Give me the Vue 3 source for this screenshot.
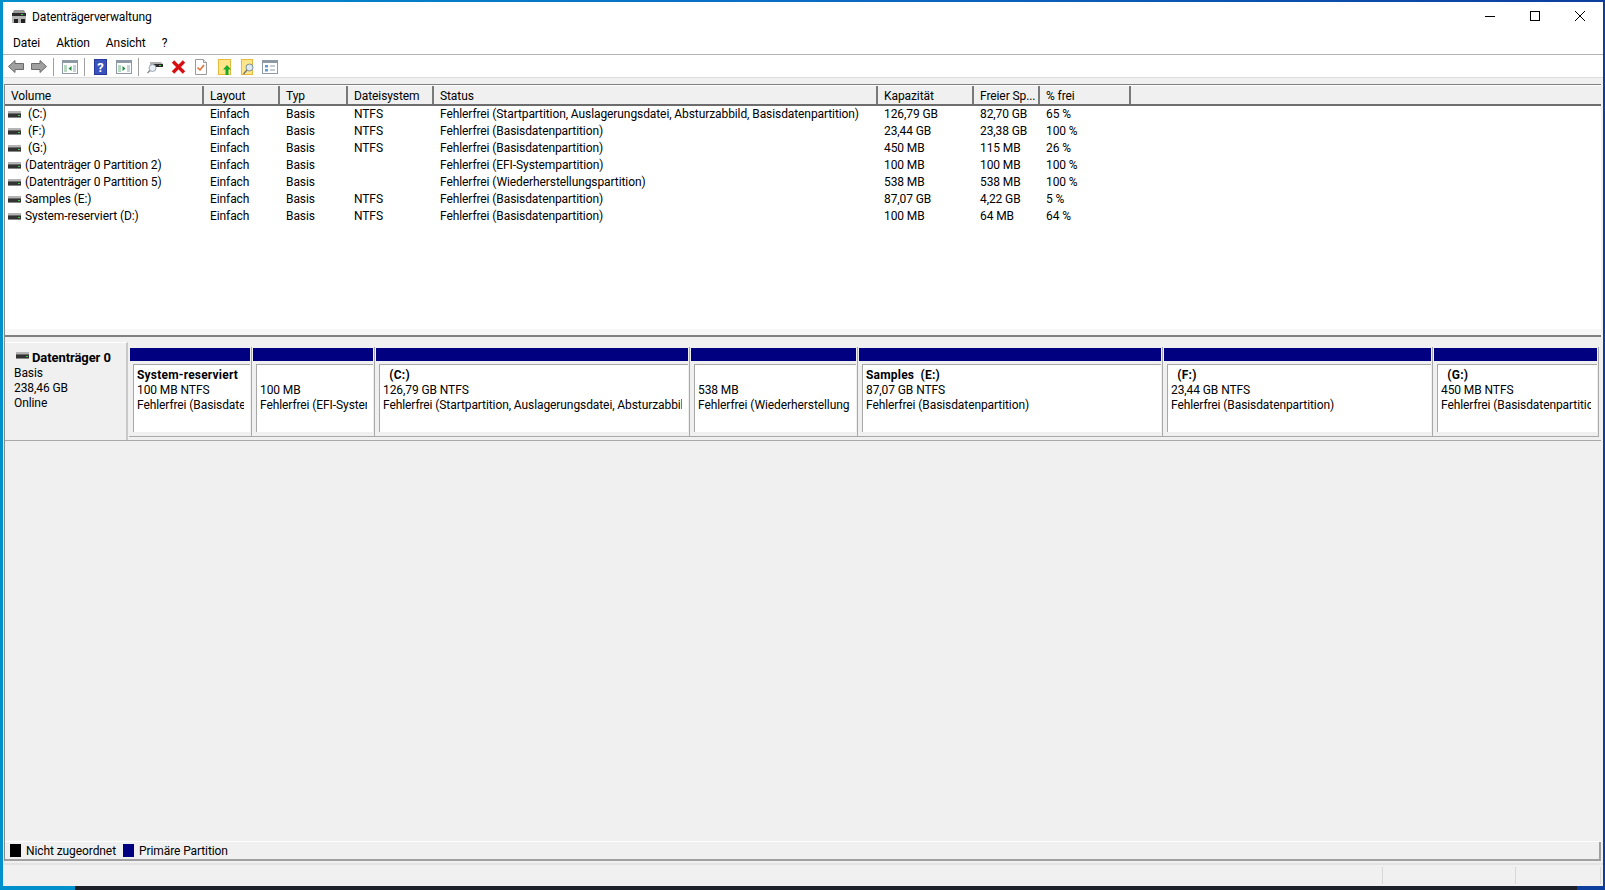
<template>
  <div class="desktop">
    <div class="window">
      <div class="titlebar">
        <svg class="app-icon" width="16" height="15" viewBox="0 0 16 15">
          <path d="M3 1h10l2 4H1z" fill="#9a9a9a" />
          <rect x="1" y="4" width="14" height="3" fill="#2b2b2b" />
          <rect x="10" y="5" width="2" height="1" fill="#3fd04a" />
          <rect x="1" y="7" width="14" height="7" fill="#b4b4b4" />
          <rect x="3" y="10" width="4" height="4" fill="#222" />
          <rect x="10" y="10" width="4" height="4" fill="#222" />
        </svg>
        <span class="title">Datenträgerverwaltung</span>
        <div class="win-buttons">
          <button class="win-btn">
            <svg width="10" height="10" viewBox="0 0 10 10"><path d="M0 5.500h10" stroke="#000" fill="none" /></svg>
          </button>
          <button class="win-btn">
            <svg width="10" height="10" viewBox="0 0 10 10"><rect x="0.5" y="0.5" width="9" height="9" stroke="#000" fill="none" /></svg>
          </button>
          <button class="win-btn">
            <svg width="10" height="10" viewBox="0 0 10 10"><path d="M0 0l10 10M10 0L0 10" stroke="#000" fill="none" stroke-width="1" /></svg>
          </button>
        </div>
      </div>

      <nav class="menubar">
        <span v-for="item in menu" :key="item">{{ item }}</span>
      </nav>

      <div class="toolbar">
        <svg class="tool back" width="16" height="13" viewBox="0 0 16 13"><path d="M0.5 6.500L7 .5v3h8.500v6H7v3z" fill="#a0a0a0" stroke="#6a6a6a" /></svg>
        <svg class="tool fwd" width="16" height="13" viewBox="0 0 16 13"><path d="M15.500 6.500L9 .5v3H.5v6H9v3z" fill="#a0a0a0" stroke="#6a6a6a" /></svg>
        <i class="sep sep-a"></i>
        <svg class="tool tree" width="16" height="14" viewBox="0 0 16 14">
          <rect x=".5" y=".5" width="15" height="13" fill="#fff" stroke="#8d9aa6" />
          <rect x="1" y="1" width="14" height="2" fill="#8d9aa6" />
          <rect x="2" y="5" width="3" height="7" fill="#b9d8c0" />
          <rect x="11" y="5" width="3" height="7" fill="#c9d2da" />
          <path d="M9.500 6v5L6.500 8.500z" fill="#1e8a3c" />
        </svg>
        <i class="sep sep-b"></i>
        <svg class="tool help" width="13" height="16" viewBox="0 0 13 16">
          <rect width="13" height="16" fill="#26389c" />
          <rect x="1" y="1" width="11" height="14" fill="#3a52bc" />
          <text x="6.500" y="13" text-anchor="middle" class="help-mark">?</text>
        </svg>
        <svg class="tool tree2" width="16" height="14" viewBox="0 0 16 14">
          <rect x=".5" y=".5" width="15" height="13" fill="#fff" stroke="#8d9aa6" />
          <rect x="1" y="1" width="14" height="2" fill="#8d9aa6" />
          <rect x="2" y="5" width="3" height="7" fill="#b9d8c0" />
          <rect x="11" y="5" width="3" height="7" fill="#c9d2da" />
          <path d="M6.500 6v5l3-2.500z" fill="#1e8a3c" />
        </svg>
        <i class="sep sep-c"></i>
        <svg class="tool scan" width="16" height="14" viewBox="0 0 16 14">
          <path d="M3 2h11l2 2v3H3z" fill="#b0b0b0" />
          <rect x="6" y="4" width="10" height="3" fill="#2b2b2b" />
          <rect x="12" y="5" width="2" height="1" fill="#3fd04a" />
          <circle cx="5.500" cy="8" r="3.500" fill="#e6eff5" stroke="#9aa8b2" />
          <path d="M3 10.500L0.500 13" stroke="#8a8a8a" stroke-width="1.500" />
        </svg>
        <svg class="tool remove" width="15" height="14" viewBox="0 0 15 14">
          <path d="M2 1.500l11 11M13 1.500l-11 11" stroke="#d80f12" stroke-width="3.400" fill="none" />
        </svg>
        <svg class="tool check" width="12" height="16" viewBox="0 0 12 16">
          <path d="M.5.5h8l3 3v12H.5z" fill="#fff" stroke="#9a9a9a" />
          <path d="M8.500.5v3h3" fill="#eee" stroke="#9a9a9a" />
          <path d="M2.500 8.500l2.500 2.500 4-5" stroke="#e8682a" stroke-width="1.500" fill="none" />
        </svg>
        <svg class="tool up" width="13" height="16" viewBox="0 0 13 16">
          <rect x=".5" y=".5" width="12" height="15" fill="#fde68a" stroke="#e8b93b" />
          <path d="M9 6l4 4.500h-2.500V16h-3v-5.500H5z" fill="#18a92a" />
        </svg>
        <svg class="tool find" width="13" height="16" viewBox="0 0 13 16">
          <rect x=".5" y=".5" width="11" height="15" fill="#fde68a" stroke="#e8b93b" />
          <circle cx="8.500" cy="8.500" r="3.500" fill="#dfeaf2" stroke="#7c8c98" />
          <path d="M6 11l-3.500 4" stroke="#7a7a7a" stroke-width="1.500" />
        </svg>
        <svg class="tool list" width="16" height="14" viewBox="0 0 16 14">
          <rect x=".5" y=".5" width="15" height="13" fill="#fff" stroke="#8d9aa6" />
          <rect x="1" y="1" width="14" height="2" fill="#8d9aa6" />
          <rect x="3" y="5" width="3" height="2.500" fill="#5f9bd6" />
          <rect x="3" y="9" width="3" height="2.500" fill="#5f9bd6" />
          <path d="M8 6h5M8 10h5" stroke="#8d9aa6" />
        </svg>
      </div>

      <div class="main">
        <section class="volumes">
          <div class="list-head vol-grid">
            <div v-for="h in headers" :key="h" class="head-cell">{{ h }}</div>
          </div>
          <div v-for="v in volumes" :key="v.name" class="vol-row vol-grid">
            <div class="cell name-cell">
              <svg class="drive" width="13" height="7" viewBox="0 0 13 7">
                <rect y="0" width="13" height="2" fill="#b4b4b4" />
                <rect y="2" width="13" height="1" fill="#6a6a6a" />
                <rect y="3" width="13" height="3" fill="#333" />
                <rect y="6" width="13" height="1" fill="#888" />
                <rect x="10" y="4" width="2" height="1" fill="#3fd04a" />
              </svg>
              <span>{{ v.name }}</span>
            </div>
            <div class="cell">Einfach</div>
            <div class="cell">Basis</div>
            <div class="cell">{{ v.fs }}</div>
            <div class="cell">{{ v.status }}</div>
            <div class="cell">{{ v.size }}</div>
            <div class="cell">{{ v.free }}</div>
            <div class="cell">{{ v.pct }}</div>
          </div>
          <div class="list-foot"></div>
        </section>

        <section class="graph">
          <div class="disk-row">
            <div class="disk-label">
              <div class="disk-name">
                <svg width="13" height="7" viewBox="0 0 13 7">
                  <rect y="0" width="13" height="2" fill="#b4b4b4" />
                  <rect y="2" width="13" height="1" fill="#6a6a6a" />
                  <rect y="3" width="13" height="3" fill="#333" />
                  <rect y="6" width="13" height="1" fill="#888" />
                  <rect x="10" y="4" width="2" height="1" fill="#3fd04a" />
                </svg>
                <b>Datenträger 0</b>
              </div>
              <div>Basis</div>
              <div>238,46 GB</div>
              <div>Online</div>
            </div>
            <div class="partitions">
              <div v-for="p in partitions" :key="p.line2 + p.w" class="partition" :style="{ width: p.w + 'px' }">
                <div class="bar"></div>
                <div class="part-box">
                  <div class="part-title">{{ p.title }}</div>
                  <div>{{ p.line2 }}</div>
                  <div>{{ p.line3 }}</div>
                </div>
              </div>
            </div>
          </div>
        </section>

        <div class="legend">
          <i class="swatch black"></i><span>Nicht zugeordnet</span>
          <i class="swatch navy"></i><span>Primäre Partition</span>
        </div>
      </div>

      <footer class="statusbar">
        <div class="st-main"></div>
        <div class="st-a"></div>
        <div class="st-b"></div>
      </footer>
    </div>
    <div class="taskbar">
      <i class="task-start"></i>
      <i class="task-end"></i>
    </div>
  </div>
</template>

<script setup>
const menu = ['Datei', 'Aktion', 'Ansicht', '?']

const headers = ['Volume', 'Layout', 'Typ', 'Dateisystem', 'Status', 'Kapazität', 'Freier Sp...', '% frei']

const volumes = [
  { name: ' (C:)', fs: 'NTFS', status: 'Fehlerfrei (Startpartition, Auslagerungsdatei, Absturzabbild, Basisdatenpartition)', size: '126,79 GB', free: '82,70 GB', pct: '65 %' },
  { name: ' (F:)', fs: 'NTFS', status: 'Fehlerfrei (Basisdatenpartition)', size: '23,44 GB', free: '23,38 GB', pct: '100 %' },
  { name: ' (G:)', fs: 'NTFS', status: 'Fehlerfrei (Basisdatenpartition)', size: '450 MB', free: '115 MB', pct: '26 %' },
  { name: '(Datenträger 0 Partition 2)', fs: '', status: 'Fehlerfrei (EFI-Systempartition)', size: '100 MB', free: '100 MB', pct: '100 %' },
  { name: '(Datenträger 0 Partition 5)', fs: '', status: 'Fehlerfrei (Wiederherstellungspartition)', size: '538 MB', free: '538 MB', pct: '100 %' },
  { name: 'Samples (E:)', fs: 'NTFS', status: 'Fehlerfrei (Basisdatenpartition)', size: '87,07 GB', free: '4,22 GB', pct: '5 %' },
  { name: 'System-reserviert (D:)', fs: 'NTFS', status: 'Fehlerfrei (Basisdatenpartition)', size: '100 MB', free: '64 MB', pct: '64 %' },
]

const partitions = [
  { w: 123, title: 'System-reserviert', line2: '100 MB NTFS', line3: 'Fehlerfrei (Basisdatenpartition)' },
  { w: 123, title: '', line2: '100 MB', line3: 'Fehlerfrei (EFI-Systempartition)' },
  { w: 315, title: '  (C:)', line2: '126,79 GB NTFS', line3: 'Fehlerfrei (Startpartition, Auslagerungsdatei, Absturzabbild, Basisdatenpartition)' },
  { w: 168, title: '', line2: '538 MB', line3: 'Fehlerfrei (Wiederherstellungspartition)' },
  { w: 305, title: 'Samples  (E:)', line2: '87,07 GB NTFS', line3: 'Fehlerfrei (Basisdatenpartition)' },
  { w: 270, title: '  (F:)', line2: '23,44 GB NTFS', line3: 'Fehlerfrei (Basisdatenpartition)' },
  { w: 166, title: '  (G:)', line2: '450 MB NTFS', line3: 'Fehlerfrei (Basisdatenpartition)' },
]
</script>

<style>
html,
body {
  margin: 0;
  overflow: hidden;
}
</style>

<style scoped>
.desktop {
  width: 1605px;
  height: 890px;
  display: flex;
  flex-direction: column;
  background: linear-gradient(90deg, #0090cc 0%, #0a6cc4 50%, #0c3e9e 100%);
  font-family: Roboto, "Open Sans", sans-serif;
  font-size: 12px;
  letter-spacing: -0.09px;
  color: #000;
}

.window {
  flex: 1;
  min-height: 0;
  margin: 2px 2px 0 3px;
  background: #f0f0f0;
  display: flex;
  flex-direction: column;
}

.taskbar {
  height: 4px;
  background: #1c2029;
  display: flex;
  justify-content: space-between;
}

.task-start {
  width: 75px;
  background: #0090cc;
}

.task-end {
  width: 28px;
  background: #0c3e9e;
}

.titlebar {
  height: 28px;
  background: #fff;
  display: flex;
  align-items: center;
  padding-left: 8px;
}

.title {
  margin-left: 5px;
  padding-top: 2px;
}

.win-buttons {
  margin-left: auto;
  margin-right: 1px;
  display: flex;
  height: 100%;
}

.win-btn {
  width: 45px;
  border: none;
  background: none;
  padding: 0;
  display: flex;
  align-items: center;
  justify-content: center;
}

.menubar {
  background: #fff;
  border-bottom: 1px solid #b4b4b4;
  display: flex;
  align-items: center;
  gap: 16px;
  padding: 2px 0 0 10px;
  height: 22px;
}

.toolbar {
  height: 21px;
  background: #fff;
  border-bottom: 1px solid #dcdcdc;
  display: flex;
  align-items: center;
  padding: 1px 0 0 5px;
}

.tool {
  flex: none;
}

.fwd {
  margin-left: 7px;
}

.sep {
  width: 1px;
  height: 18px;
  background: #a0a0a0;
  flex: none;
}

.sep-a {
  margin: 0 8px 0 6px;
}

.sep-b {
  margin: 0 9px 0 6px;
}

.sep-c {
  margin: 0 8px 0 6px;
}

.tree2 {
  margin-left: 9px;
}

.remove {
  margin-left: 8px;
}

.check {
  margin-left: 9px;
}

.up {
  margin-left: 11px;
}

.find {
  margin-left: 10px;
}

.list {
  margin-left: 8px;
}

.help-mark {
  fill: #fff;
  font-size: 13px;
  font-weight: 700;
}

.main {
  flex: 1;
  min-height: 0;
  margin: 6px 2px 0 1px;
  display: flex;
  flex-direction: column;
  border-left: 1px solid #8a8a8a;
}

.volumes {
  height: 250px;
  background: #fff;
  border-top: 1px solid #808080;
  display: flex;
  flex-direction: column;
  border-bottom: 2px solid #808080;
}

.list-foot {
  margin-top: auto;
  height: 6px;
  background: #f7f7f7;
}

.vol-grid {
  display: grid;
  grid-template-columns: 199px 76px 68px 86px 444px 96px 66px 91px 1fr;
}

.list-head {
  background: #f0f0f0;
  border-bottom: 2px solid #6d6d6d;
  border-top: 1px solid #fff;
  box-sizing: border-box;
  height: 21px;
}

.head-cell {
  padding: 3px 0 0 6px;
  border-right: 2px solid #7a7a7a;
  white-space: nowrap;
  overflow: hidden;
}

.vol-row {
  height: 17px;
  line-height: 17px;
}

.cell {
  padding-left: 6px;
  white-space: pre;
}

.name-cell {
  padding-left: 3px;
  display: flex;
  align-items: center;
  gap: 4px;
}

.graph {
  flex: 1;
  min-height: 0;
  padding-top: 5px;
}

.disk-row {
  height: 98px;
  display: flex;
  border-bottom: 1px solid #a8a8a8;
}

.disk-label {
  width: 123px;
  flex: none;
  border-right: 2px solid #c8c8c8;
  border-top: 1px solid #fff;
  box-sizing: border-box;
  padding: 6px 0 0 9px;
  line-height: 15px;
}

.disk-name {
  display: flex;
  align-items: center;
  gap: 3px;
  margin-left: 2px;
  font-size: 13px;
  height: 17px;
}

.disk-name svg {
  margin-bottom: 5px;
}

.partitions {
  display: flex;
  padding: 5px 0 0 1px;
}

.partition {
  box-sizing: border-box;
  height: 90px;
  padding: 1px 1px 0;
  border-right: 1px solid #a8a8a8;
  border-bottom: 1px solid #a8a8a8;
}

.bar {
  height: 13px;
  background: #000080;
}

.part-box {
  box-sizing: border-box;
  height: 68px;
  margin: 3px 0 0 3px;
  padding: 3px 6px 0 3px;
  background: #fff;
  border-top: 1px solid #a8a8a8;
  border-left: 1px solid #a8a8a8;
  line-height: 15px;
  overflow: hidden;
  white-space: pre;
}

.part-box > div {
  height: 15px;
  overflow: hidden;
}

.part-title {
  font-weight: 700;
  letter-spacing: 0.2px;
}

.legend {
  box-sizing: border-box;
  height: 20px;
  margin-top: auto;
  border-top: 1px solid #fff;
  border-bottom: 2px solid #a0a0a0;
  box-shadow: inset -2px 0 0 #a0a0a0;
  display: flex;
  align-items: center;
  padding-left: 5px;
  gap: 5px;
}

.legend span {
  margin-right: 2px;
}

.swatch {
  width: 11px;
  height: 13px;
  flex: none;
}

.swatch.black {
  background: #000;
}

.swatch.navy {
  background: #000080;
}

.statusbar {
  height: 23px;
  border-top: 2px solid #e3e3e3;
  display: flex;
  box-sizing: border-box;
  margin-top: 2px;
}

.st-main {
  width: 1379px;
  border-right: 1px solid #d8d8d8;
  margin: 2px 0;
}

.st-a {
  width: 132px;
  border-right: 1px solid #d8d8d8;
  margin: 2px 0;
}

.st-b {
  width: 84px;
  border-right: 1px solid #d8d8d8;
  margin: 2px 0;
}
</style>
